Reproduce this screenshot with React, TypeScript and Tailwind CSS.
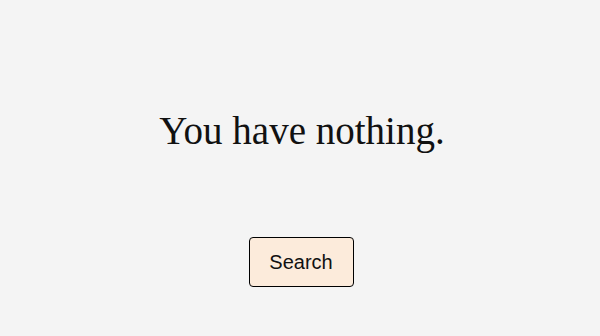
export default function App() {
  return (
    <div className="flex h-[336px] w-[600px] flex-col items-center bg-[#f4f4f4]">
      <h1 className="mt-[107px] ml-[4px] text-[39px] leading-[48px] text-[#111] [font-family:'Liberation_Serif',serif]">
        You have nothing.
      </h1>
      <button className="mt-[82px] ml-[2px] h-[50px] w-[105px] rounded-[4px] border border-black bg-[#fcebdb] text-[20px] text-[#111] [font-family:'Liberation_Sans',Arial,sans-serif]">
        Search
      </button>
    </div>
  )
}
